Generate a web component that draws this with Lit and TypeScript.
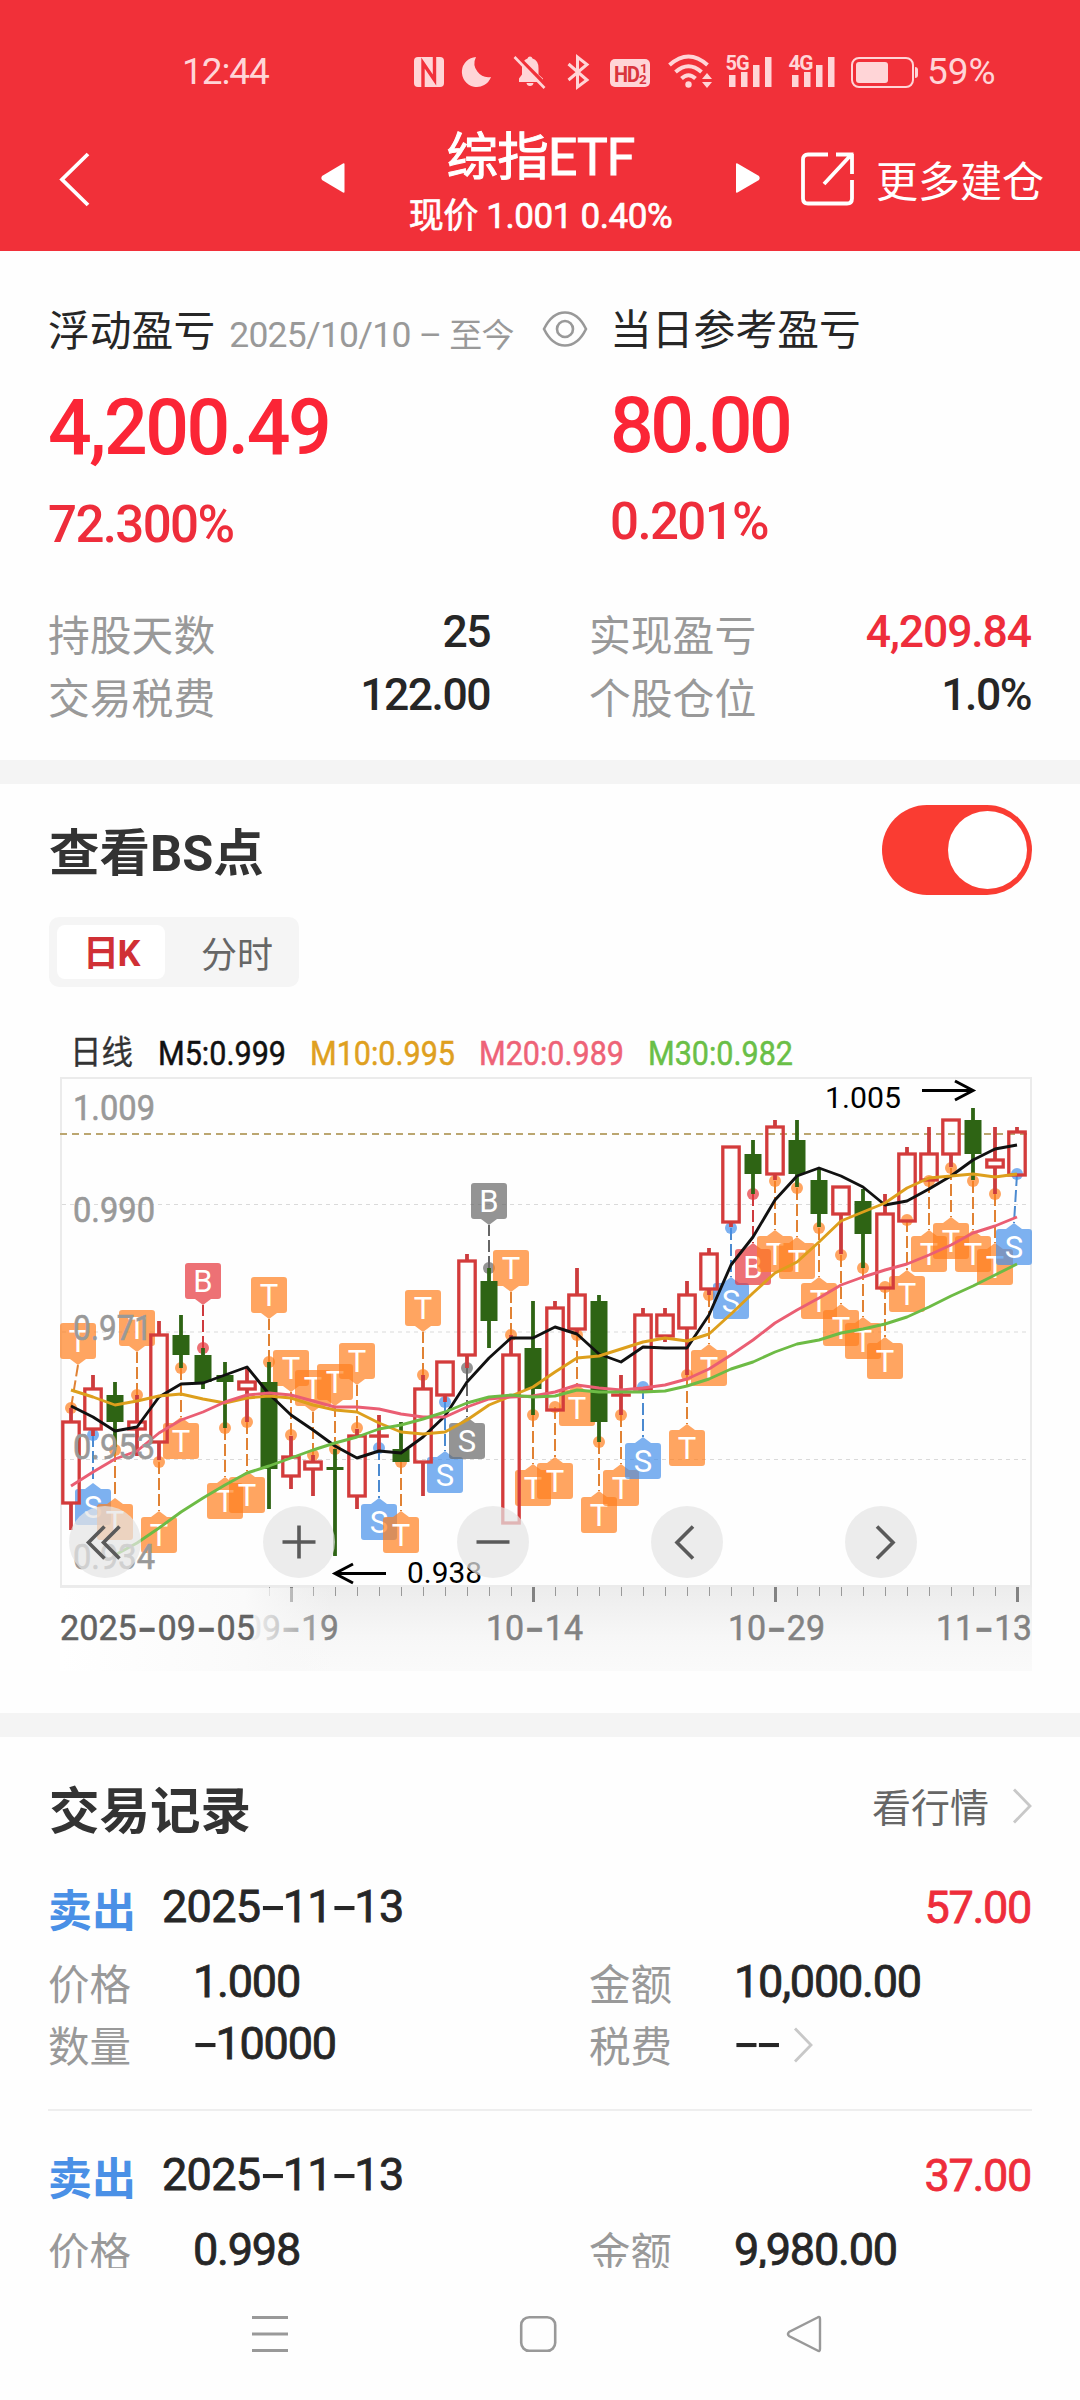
import { LitElement, html, svg, css } from "lit";
import { customElement, property } from "lit/decorators.js";

type Tone = "r" | "g";
type Candle = [Tone, number, number, number, number];
type Mark = [number, string, string, number, number];

/* tone, body top, body bottom, wick top, wick bottom */
const CANDLES: Candle[] = [
  ["r", 1422, 1503, 1408, 1530], ["r", 1389, 1429, 1375, 1436], ["g", 1395, 1422, 1382, 1447],
  ["r", 1422, 1429, 1395, 1456], ["r", 1335, 1442, 1321, 1460], ["g", 1335, 1355, 1315, 1368],
  ["g", 1355, 1382, 1348, 1389], ["g", 1375, 1382, 1362, 1428], ["r", 1382, 1389, 1368, 1422],
  ["g", 1382, 1469, 1362, 1509], ["r", 1457, 1476, 1436, 1489], ["r", 1462, 1469, 1455, 1496],
  ["g", 1467, 1470, 1449, 1556], ["r", 1436, 1496, 1429, 1509], ["r", 1436, 1436, 1415, 1452],
  ["g", 1449, 1462, 1422, 1462], ["r", 1389, 1462, 1375, 1496], ["r", 1362, 1395, 1362, 1402],
  ["r", 1261, 1355, 1254, 1368], ["g", 1281, 1321, 1268, 1348], ["r", 1355, 1523, 1335, 1523],
  ["g", 1348, 1389, 1301, 1415], ["r", 1308, 1410, 1301, 1410], ["r", 1295, 1329, 1268, 1333],
  ["g", 1301, 1422, 1295, 1442], ["r", 1395, 1395, 1375, 1415], ["r", 1315, 1389, 1308, 1389],
  ["r", 1315, 1336, 1308, 1342], ["r", 1295, 1328, 1281, 1375], ["r", 1254, 1289, 1248, 1295],
  ["r", 1147, 1222, 1147, 1227], ["g", 1154, 1174, 1140, 1194], ["r", 1127, 1174, 1120, 1180],
  ["g", 1140, 1174, 1120, 1187], ["g", 1180, 1214, 1169, 1227], ["r", 1187, 1214, 1187, 1254],
  ["g", 1201, 1234, 1189, 1268], ["r", 1214, 1288, 1194, 1288], ["r", 1154, 1221, 1147, 1221],
  ["r", 1154, 1180, 1127, 1180], ["r", 1120, 1154, 1120, 1167], ["g", 1120, 1154, 1108, 1180],
  ["r", 1160, 1167, 1127, 1194], ["r", 1132, 1175, 1127, 1175],
];

/* candle index, letter, colour, anchor y, box top */
const MARKS: Mark[] = [
  [0, "T", "o", 1408, 1323], [1, "S", "b", 1435, 1489], [2, "T", "o", 1450, 1504],
  [3, "T", "o", 1395, 1310], [4, "T", "o", 1462, 1517], [5, "T", "o", 1368, 1423],
  [6, "B", "r", 1348, 1263], [7, "T", "o", 1428, 1483], [8, "T", "o", 1422, 1477],
  [9, "T", "o", 1362, 1277], [10, "T", "o", 1435, 1350], [11, "T", "o", 1455, 1370],
  [12, "T", "o", 1449, 1364], [13, "T", "o", 1428, 1343], [14, "S", "b", 1448, 1504],
  [15, "T", "o", 1462, 1517], [16, "T", "o", 1375, 1290], [17, "S", "b", 1402, 1457],
  [18, "S", "k", 1368, 1423], [19, "B", "k", 1268, 1183], [20, "T", "o", 1335, 1250],
  [21, "T", "o", 1415, 1470], [22, "T", "o", 1407, 1463], [23, "T", "o", 1335, 1390],
  [24, "T", "o", 1442, 1497], [25, "T", "o", 1415, 1470], [26, "S", "b", 1387, 1443],
  [28, "T", "o", 1375, 1430], [29, "T", "o", 1295, 1350], [30, "S", "b", 1228, 1283],
  [31, "B", "r", 1194, 1249], [32, "T", "o", 1181, 1236], [33, "T", "o", 1188, 1243],
  [34, "T", "o", 1228, 1283], [35, "T", "o", 1255, 1310], [36, "T", "o", 1268, 1323],
  [37, "T", "o", 1287, 1343], [38, "T", "o", 1220, 1276], [39, "T", "o", 1181, 1236],
  [40, "T", "o", 1168, 1223], [41, "T", "o", 1181, 1236], [42, "T", "o", 1194, 1249],
  [43, "S", "b", 1174, 1229],
];

/* moving averages, right-aligned to the newest candle */
const AVERAGES: { tone: string; ys: number[] }[] = [
  { tone: "m5", ys: [1406, 1417, 1431, 1427, 1397, 1384, 1383, 1375, 1367, 1394, 1415, 1430, 1446, 1458, 1451, 1453, 1437, 1416, 1382, 1358, 1338, 1338, 1327, 1334, 1354, 1362, 1347, 1348, 1348, 1315, 1265, 1237, 1200, 1176, 1168, 1176, 1187, 1205, 1201, 1189, 1176, 1160, 1149, 1145] },
  { tone: "m10", ys: [1390, 1397, 1405, 1401, 1396, 1394, 1399, 1403, 1398, 1396, 1398, 1405, 1410, 1412, 1423, 1432, 1434, 1432, 1420, 1405, 1396, 1387, 1372, 1358, 1356, 1349, 1342, 1338, 1341, 1334, 1314, 1293, 1273, 1262, 1242, 1221, 1212, 1203, 1188, 1178, 1176, 1174, 1177, 1174] },
  { tone: "m20", ys: [1486, 1472, 1459, 1451, 1433, 1420, 1412, 1402, 1395, 1393, 1395, 1401, 1407, 1407, 1409, 1414, 1417, 1417, 1407, 1399, 1397, 1396, 1392, 1385, 1388, 1390, 1388, 1385, 1379, 1369, 1355, 1340, 1323, 1310, 1298, 1285, 1277, 1270, 1264, 1255, 1245, 1233, 1226, 1217] },
  { tone: "m30", ys: [1555, 1543, 1528, 1512, 1498, 1485, 1473, 1466, 1458, 1450, 1443, 1437, 1429, 1425, 1419, 1412, 1403, 1397, 1395, 1397, 1396, 1390, 1392, 1392, 1392, 1391, 1386, 1379, 1369, 1362, 1352, 1344, 1340, 1333, 1329, 1324, 1317, 1307, 1296, 1286, 1275, 1264] },
];

const cx = (i: number) => 71 + 22 * i;

@customElement("bs-chart")
export class BsChart extends LitElement {
  static styles = css`
    :host { display: block; }
    svg { display: block; }
    text { font-family: Roboto, "Noto Sans CJK SC", sans-serif; }
    .legend { font-size: 33px; font-weight: 400; stroke-width: 0.5; }
    .lg { fill: #333; stroke: #333; stroke-width: 0.3; }
    .l5 { fill: #111; stroke: #111; }
    .l10 { fill: #dfa020; stroke: #dfa020; }
    .l20 { fill: #ee6377; stroke: #ee6377; }
    .l30 { fill: #6abf47; stroke: #6abf47; }
    .axis { font-size: 35.5px; fill: #999; stroke: #999; stroke-width: 0.6; }
    .date { font-size: 35px; fill: #828282; stroke: #828282; stroke-width: 0.5; }
    .first { fill: #636363; stroke: #636363; }
    .dash { font-family: Inter, sans-serif; font-size: 46px; font-weight: 400; }
    .peak { font-size: 29px; fill: #000; }
    .arrow { fill: none; stroke: #000; stroke-width: 3; }
    .frame { fill: none; stroke: #ebebeb; stroke-width: 2; }
    .grid { stroke: #dadada; stroke-width: 1.2; stroke-dasharray: 4 4; }
    .price { stroke: #bba670; stroke-width: 1.8; stroke-dasharray: 7 5; }
    .mark text { fill: #fff; font-size: 31px; text-anchor: middle; }
    .stem { fill: none; stroke-width: 2; stroke-dasharray: 12 4; }
    .o .box { fill: #ff7f1e; fill-opacity: 0.7; }
    .b .box { fill: #4690e9; fill-opacity: 0.7; }
    .r .box { fill: #e6343a; fill-opacity: 0.7; }
    .k .box { fill: #666; fill-opacity: 0.7; }
    .o .stem { stroke: #e08234; }
    .b .stem { stroke: #4b8ad0; }
    .r .stem { stroke: #ce3a3e; }
    .k .stem { stroke: #666; }
    .hollow { fill: none; stroke: #d33b3b; stroke-width: 3.3; }
    .wr { stroke: #cc3b3d; stroke-width: 3.8; }
    .wg { stroke: #2e6414; stroke-width: 3.8; }
    .down { fill: #2e6414; }
    .ma { fill: none; stroke-width: 2.9; stroke-linejoin: round; }
    .m5 { stroke: #111; }
    .m10 { stroke: #dd9f1c; }
    .m20 { stroke: #ea5e73; }
    .m30 { stroke: #6dbb45; }
    .tick { stroke: #999; stroke-width: 1; }
    .major { stroke: #828282; stroke-width: 3; }
    .btn { fill: #e5e5e5; fill-opacity: 0.72; }
    .glyph { fill: none; stroke: #5a5a5a; stroke-width: 3.6; }
  `;

  private mark([i, letter, tone, dot, top]: Mark) {
    const x = cx(i);
    const bx = i === 0 ? 78 : i === 43 ? 1014 : x;
    const above = top < dot;
    const tip = above ? top + 42 : top - 6;
    const edge = above ? top + 36 : top;
    return svg`<g class="mark ${tone}">
      <path class="stem" d="M${x} ${dot}L${bx} ${tip}"/>
      <circle class="box" cx=${x} cy=${dot} r="6"/>
      <path class="box" d=${`M${bx - 18} ${top + 3}q0-3 3-3h30q3 0 3 3v30q0 3-3 3h-30q-3 0-3-3z M${bx - 8} ${edge}L${bx} ${tip}L${bx + 8} ${edge}z`}/>
      <text x=${bx} y=${top + 29}>${letter}</text>
    </g>`;
  }

  private candle([tone, t, b, wt, wb]: Candle, i: number) {
    const x = cx(i);
    if (tone === "g") {
      return svg`<line class="wg" x1=${x} x2=${x} y1=${wt} y2=${wb}/>
        <rect class="down" x=${x - 8.5} y=${t} width="17" height=${b - t}/>`;
    }
    return svg`<line class="wr" x1=${x} x2=${x} y1=${wt} y2=${t}/>
      <line class="wr" x1=${x} x2=${x} y1=${b} y2=${wb}/>
      <rect class="hollow" x=${x - 8.2} y=${t} width="16.4" height=${Math.max(b - t, 0.1)}/>`;
  }

  private day(text: string, x: number, w: number, extra = "") {
    const bits = text.split("-");
    return svg`<text class="date ${extra}" x=${x} y="1640" textLength=${w} lengthAdjust="spacingAndGlyphs">${bits.map(
      (b, n) => n === 0 ? svg`${b}` : svg`<tspan class="dash" dy="4">-</tspan><tspan dy="-4">${b}</tspan>`)}</text>`;
  }

  private label(cls: string, t: string, x: number, y: number, w: number) {
    return svg`<text class=${cls} x=${x} y=${y} textLength=${w} lengthAdjust="spacingAndGlyphs">${t}</text>`;
  }

  render() {
    return html`<svg width="1080" height="660" viewBox="0 1030 1080 660">
      <defs>
        <linearGradient id="strip" x1="0" y1="0" x2="0" y2="1">
          <stop offset="0" stop-color="#ececec"/><stop offset="0.6" stop-color="#f7f7f7"/><stop offset="1" stop-color="#fafafa"/>
        </linearGradient>
        <linearGradient id="fade" x1="0" y1="0" x2="1" y2="0">
          <stop offset="0" stop-color="#fff"/><stop offset="0.68" stop-color="#fafafa"/><stop offset="0.75" stop-color="#f9f9f9" stop-opacity="0.8"/><stop offset="1" stop-color="#f6f6f6" stop-opacity="0"/>
        </linearGradient>
      </defs>
      ${this.label("legend lg", "日线", 70, 1064, 63)}
      ${this.label("legend l5", "M5:0.999", 158, 1065, 128)}
      ${this.label("legend l10", "M10:0.995", 310, 1065, 145)}
      ${this.label("legend l20", "M20:0.989", 479, 1065, 145)}
      ${this.label("legend l30", "M30:0.982", 648, 1065, 145)}
      <rect x="60" y="1586" width="972" height="85" fill="url(#strip)"/>
      ${[1204.5, 1332, 1459.5].map((y) => svg`<line class="grid" x1="62" x2="1031" y1=${y} y2=${y}/>`)}
      <rect class="frame" x="61" y="1078" width="970" height="508"/>
      <line class="price" x1="60" x2="1031" y1="1134" y2="1134"/>
      ${MARKS.map((m) => this.mark(m))}
      ${CANDLES.map((c, i) => this.candle(c, i))}
      ${AVERAGES.map((a) => {
        const start = 44 - a.ys.length;
        return svg`<polyline class="ma ${a.tone}" points=${a.ys.map((y, n) => `${cx(start + n)},${y}`).join(" ")}/>`;
      })}
      ${this.label("axis", "1.009", 73, 1120, 82)}
      ${this.label("axis", "0.990", 73, 1222, 82)}
      ${this.label("axis", "0.971", 73, 1340, 79)}
      ${this.label("axis", "0.953", 73, 1459, 82)}
      ${this.label("axis", "0.934", 73, 1569, 82)}
      ${this.label("peak", "1.005", 825, 1108, 76)}
      <path class="arrow" d="M922 1090.5H973M955 1081l18 9.500-18 9.500"/>
      ${this.label("peak", "0.938", 407, 1583, 75)}
      <path class="arrow" d="M386 1573.500H336M353 1564l-18 9.500 18 9.500"/>
      ${Array.from({ length: 35 }, (_, n) => n + 9).map((i) =>
        (i - 10) % 11 === 0
          ? svg`<line class="major" x1=${cx(i) + 0.5} x2=${cx(i) + 0.5} y1="1587" y2="1602"/>`
          : svg`<line class="tick" x1=${cx(i) + 0.5} x2=${cx(i) + 0.5} y1="1587" y2="1596"/>`)}
      ${this.day("09-19", 243, 96)}
      <rect x="60" y="1588" width="272" height="83" fill="url(#fade)"/>
      ${this.day("2025-09-05", 60, 195, "first")}
      ${this.day("10-14", 486, 97)}
      ${this.day("10-29", 728, 97)}
      ${this.day("11-13", 936, 96)}
      ${[105, 299, 493, 687, 881].map((x) => svg`<circle class="btn" cx=${x} cy="1542" r="36"/>`)}
      <path class="glyph" d="M104.500 1526.500L88.500 1542.500l16 16M119.500 1526.500l-16 16 16 16M282.500 1542h33M299 1525.500v33M476.500 1542h33M693 1526.500l-16 16 16 16M877 1526.500l16 16-16 16"/>
    </svg>`;
  }
}

const chevron = (w = 20) => html`<svg class="chev" width=${w} height="36" viewBox="0 0 20 36">
  <path d="M2 1.500L18 18 2 34.500" fill="none" stroke="#c8c8c8" stroke-width="2.800"/></svg>`;

const dashed = (t: string) => t.split(/(-)/).map((p) => (p === "-" ? html`<span class="dash">-</span>` : p));

@customElement("trade-row")
export class TradeRow extends LitElement {
  @property() date = "";
  @property() gain = "";
  @property() price = "";
  @property() total = "";
  @property() count = "";
  @property() fee = "";

  static styles = css`
    :host { display: block; font-family: Roboto, "Noto Sans CJK SC", sans-serif; color: #262626; }
    .head { display: flex; align-items: center; height: 74px; font-size: 45px; letter-spacing: -0.9px; }
    .side { color: #4a90e6; font-weight: 700; font-size: 44px; letter-spacing: 0; width: 114px; padding-top: 1px; }
    .date, .v { line-height: 60px; padding-bottom: 1px; font-weight: 400; -webkit-text-stroke: 0.8px #262626; }
    .date { letter-spacing: -0.700px; }
    .gain { margin-left: auto; color: #ee2d3b; font-weight: 400; letter-spacing: -1.300px; -webkit-text-stroke: 0.8px #ee2d3b; }
    .grid { display: grid; grid-template-columns: 541px 1fr; grid-auto-rows: 62.500px; padding-top: 7px; }
    .cell { display: flex; align-items: center; }
    .k { width: 145px; font-size: 41.500px; color: #999; padding-bottom: 1px; font-weight: 400; }
    .v { font-size: 45px; letter-spacing: -1.200px; }
    .dash { font-family: Inter, sans-serif; font-size: 66px; line-height: 0; vertical-align: -7px; letter-spacing: -5px; margin-left: -2.500px; font-weight: 300; -webkit-text-stroke: 0; }
    .chev { margin-left: 14px; }
  `;

  render() {
    return html`
      <div class="head"><span class="side">卖出</span><span class="date">${dashed(this.date)}</span><span class="gain">${this.gain}</span></div>
      <div class="grid">
        <div class="cell"><span class="k">价格</span><span class="v">${this.price}</span></div>
        <div class="cell"><span class="k">金额</span><span class="v">${this.total}</span></div>
        ${this.count ? html`
        <div class="cell"><span class="k">数量</span><span class="v">${dashed(this.count)}</span></div>
        <div class="cell"><span class="k">税费</span><span class="v">${dashed(this.fee)}</span>${chevron()}</div>` : ""}
      </div>`;
  }
}

@customElement("app-root")
export class AppRoot extends LitElement {
  static styles = css`
    :host { display: block; width: 1080px; height: 2400px; overflow: hidden; background: #fefefe; color: #262626;
      font-family: Roboto, "Noto Sans CJK SC", sans-serif; }
    * { box-sizing: border-box; }
    svg { display: block; flex: none; }
    .header { height: 250.500px; background: #f13039; color: #fff; }
    .status { display: flex; align-items: center; height: 112px; padding: 30px 0 0 182px; color: #ffd5d7; font-size: 37px; letter-spacing: -1.100px; }
    .clock { width: 218px; }
    .batt { margin-left: 7px; letter-spacing: 0; }
    .bar { display: flex; align-items: center; height: 134px; padding-left: 58px; }
    .bar .title { width: 389px; display: flex; flex-direction: column; align-items: center; padding-top: 10px; }
    .name { font-size: 51.500px; font-weight: 400; line-height: 62px; letter-spacing: -0.800px; -webkit-text-stroke: 1px #fff; }
    .quote { font-size: 35px; font-weight: 400; line-height: 48px; letter-spacing: -0.400px; margin-top: 4px; -webkit-text-stroke: 0.7px #fff; }
    .left { margin-left: 230px; }
    .bar .left, .bar .right { margin-top: -2px; }
    .more { font-size: 42px; margin-left: 20px; line-height: 60px; padding-top: 8px; }
    .share { margin-left: 39px; }
    .summary { height: 509.500px; padding: 39.500px 49px 0 48px; }
    .cols { display: grid; grid-template-columns: 562px 1fr; }
    .col-b { margin-top: -1px; }
    .cap { display: flex; align-items: center; height: 80px; font-size: 41.800px; line-height: 80px; padding-top: 3px; }
    .since { font-size: 35.500px; color: #999; margin-left: 14px; padding-top: 8px; letter-spacing: -0.750px; white-space: nowrap; }
    .since .cjk { font-size: 33px; }
    .eye { margin-left: auto; margin-right: 22px; margin-top: -5px; }
    .big { font-size: 77px; font-weight: 500; height: 112px; line-height: 117px; letter-spacing: -2.500px; color: #fb2536; }
    .pct { font-size: 51px; font-weight: 500; height: 82px; line-height: 85px; letter-spacing: -1.600px; color: #ee2d3b; }
    .col-b .big { height: 108px; line-height: 114px; letter-spacing: -3.400px; }
    .col-b .pct { height: 86px; line-height: 90px; }
    .facts { display: grid; grid-template-columns: 442px 442px; column-gap: 99px; grid-auto-rows: 63px; margin-top: 38px; }
    .fact { display: flex; justify-content: space-between; align-items: center; }
    .fact .k { font-size: 41.800px; color: #999; padding-bottom: 2px; font-weight: 400; }
    .fact .v { font-size: 44.500px; font-weight: 500; letter-spacing: -1.500px; padding-bottom: 3px; }
    .fact .red { color: #ee2d3b; letter-spacing: -1.100px; }
    .gap { height: 24px; background: #f4f4f4; }
    .viewer { height: 929px; }
    .row { display: flex; align-items: center; justify-content: space-between; padding: 0 48px 0 49px; }
    .h { font-size: 50.500px; font-weight: 700; color: #333; }
    .viewer .row { height: 133px; }
    .viewer .h { padding-bottom: 4px; }
    .toggle { width: 150px; height: 90px; border-radius: 45px; background: #fa3c32; margin-top: -1px; padding: 6px 5px; display: flex; justify-content: flex-end; }
    .knob { width: 79px; height: 78px; border-radius: 50%; background: #fff; }
    .tabs { display: flex; align-items: center; width: 250px; height: 70px; margin-left: 49px; padding: 8px; border-radius: 10px; background: #f5f5f5; font-size: 36px; color: #666; }
    .on { width: 108px; height: 54px; line-height: 58px; border-radius: 8px; background: #fff; color: #d03035; font-weight: 700; text-align: center; letter-spacing: -1.500px; }
    .off { padding-left: 36px; font-weight: 400; }
    .chart { margin-top: 43px; height: 660px; }
    .trades { height: 531px; overflow: hidden; }
    .trades .row { height: 130px; padding-top: 10px; }
    .link { display: flex; align-items: center; gap: 23px; font-size: 39px; color: #666; font-weight: 400; margin-top: -4px; }
    .link .chev { margin-top: 2px; }
    .list { padding: 3px 49px 0 48px; }
    .sep { height: 2px; background: #eee; margin: 33px -1px 27px 0; }
    .nav { height: 132px; background: #fefefe; display: flex; align-items: center; padding-left: 250px; }
    .sq { margin-left: 228px; }
    .tri { margin-left: 227px; }
  `;

  private statusIcons() {
    return html`<svg width="520" height="60" viewBox="400 40 520 60" fill="#ffd5d7">
      <rect x="414" y="56" width="30" height="30" rx="4"/>
      <path d="M423 86V62L434.500 79V56" fill="none" stroke="#f13039" stroke-width="3.400"/>
      <path d="M429 78v8M429 56v8" stroke="#ffd5d7" stroke-width="2"/>
      <path d="M476 56A15 15 0 1 0 491 76A14 14 0 0 1 476 56z"/>
      <path d="M519 79v-1.500l3-4V67q0-8 5.500-9.500a2.600 2.600 0 0 1 5 0Q538.500 59.500 538.500 67v6.500l4.500 4V81h-24zM526.500 82h7q-.5 3-3.500 3t-3.500-3z"/>
      <path d="M516.500 55l31 31" stroke="#f13039" stroke-width="4"/>
      <path d="M514.500 56l30 31" stroke="#ffd5d7" stroke-width="2.600"/>
      <path d="M568.500 63L587 79l-9.500 7V56l9.500 7.500L568.500 79" fill="none" stroke="#ffd5d7" stroke-width="3"/>
      <rect x="610" y="58" width="40" height="28" rx="5"/>
      <text x="614" y="80.500" font-family="Roboto" font-weight="700" font-size="22" fill="#d9353d" textLength="25" lengthAdjust="spacingAndGlyphs">HD</text>
      <text x="640" y="71.500" font-family="Roboto" font-weight="700" font-size="13.500" fill="#d9353d">1</text>
      <text x="639" y="82.500" font-family="Roboto" font-weight="700" font-size="13.500" fill="#d9353d">2</text>
      <g fill="none" stroke="#ffd5d7" stroke-width="4">
        <path d="M669.500 64Q688.500 47 707.500 64M675.500 71Q688.500 59.500 701.500 71M681.500 77.500Q688.500 71 695.500 77.500"/>
      </g>
      <circle cx="688.500" cy="83.500" r="3.200"/>
      <path d="M702 78l5-6 5 6zM702 81h10l-5 6z"/>
      <text x="725.500" y="69" font-family="Roboto" font-weight="700" font-size="20.500" textLength="23" lengthAdjust="spacingAndGlyphs">5G</text>
      <text x="788.500" y="69" font-family="Roboto" font-weight="700" font-size="20.500" textLength="24" lengthAdjust="spacingAndGlyphs">4G</text>
      ${[729, 792].map((x) => svg`<path d=${`M${x} 74h6.500v12h-6.500zM${x + 12} 71h6.500v15h-6.500zM${x + 24} 64h6.500v22h-6.500zM${x + 36} 56h6.500v30h-6.500z`}/>`)}
      <rect x="852" y="57" width="61" height="29" rx="7" fill="none" stroke="#ffd5d7" stroke-width="2"/>
      <rect x="856" y="61" width="32" height="21" rx="3"/>
      <path d="M915 66q3 0 3 3v5q0 3-3 3z"/>
    </svg>`;
  }

  render() {
    return html`
      <div class="header">
        <div class="status"><span class="clock">12:44</span>${this.statusIcons()}<span class="batt">59%</span></div>
        <div class="bar">
          <svg width="32" height="56" viewBox="0 0 32 56"><path d="M30 3L4 28.500 30 54" fill="none" stroke="#fff" stroke-width="3.800"/></svg>
          <svg class="left" width="26" height="32" viewBox="0 0 26 32"><path d="M24.500 2v28q0 1-1.500 .5L2 18q-1.500-2 0-4L23 1.500q1.500-.5 1.500 .5z" fill="#fff"/></svg>
          <div class="title"><span class="name">综指ETF</span><span class="quote">现价 1.001 0.40%</span></div>
          <svg class="right" width="26" height="32" viewBox="0 0 26 32"><path d="M1 2v28q0 1 1.500 .5L24 18q1.500-2 0-4L2.500 1.500Q1 1 1 2z" fill="#fff"/></svg>
          <svg class="share" width="56" height="56" viewBox="0 0 56 56"><path d="M28 3.500H8Q3 3.500 3 8.500v39q0 5 5 5h39q5 0 5-5V29M24 33L50 5M36 3.500h17.500M52 3v20" fill="none" stroke="#fff" stroke-width="3.800"/></svg>
          <span class="more">更多建仓</span>
        </div>
      </div>
      <div class="summary">
        <div class="cols">
          <div>
            <div class="cap"><span>浮动盈亏</span><span class="since">2025/10/10 – <span class="cjk">至今</span></span>
              <svg class="eye" width="46" height="38" viewBox="0 0 46 38" fill="none" stroke="#999" stroke-width="2.600"><path d="M2 19Q10 2.500 23 2.500T44 19Q36 35.500 23 35.500T2 19z"/><circle cx="23" cy="19" r="8"/></svg></div>
            <div class="big">4,200.49</div>
            <div class="pct">72.300%</div>
          </div>
          <div class="col-b">
            <div class="cap">当日参考盈亏</div>
            <div class="big">80.00</div>
            <div class="pct">0.201%</div>
          </div>
        </div>
        <div class="facts">
          <div class="fact"><span class="k">持股天数</span><span class="v">25</span></div>
          <div class="fact"><span class="k">实现盈亏</span><span class="v red">4,209.84</span></div>
          <div class="fact"><span class="k">交易税费</span><span class="v">122.00</span></div>
          <div class="fact"><span class="k">个股仓位</span><span class="v">1.0%</span></div>
        </div>
      </div>
      <div class="gap"></div>
      <div class="viewer">
        <div class="row"><span class="h">查看BS点</span><div class="toggle"><div class="knob"></div></div></div>
        <div class="tabs"><span class="on">日K</span><span class="off">分时</span></div>
        <bs-chart class="chart"></bs-chart>
      </div>
      <div class="gap"></div>
      <div class="trades">
        <div class="row"><span class="h">交易记录</span><span class="link">看行情${chevron()}</span></div>
        <div class="list">
          <trade-row date="2025-11-13" gain="57.00" price="1.000" total="10,000.00" count="-10000" fee="--"></trade-row>
          <div class="sep"></div>
          <trade-row date="2025-11-13" gain="37.00" price="0.998" total="9,980.00"></trade-row>
        </div>
      </div>
      <div class="nav">
        <svg width="40" height="40" viewBox="0 0 40 40"><path d="M2 3.500h36M2 20h36M2 36.500h36" stroke="#999" stroke-width="3"/></svg>
        <svg class="sq" width="40" height="40" viewBox="0 0 40 40"><rect x="3.200" y="3.200" width="34" height="33.600" rx="8" fill="none" stroke="#999" stroke-width="2.600"/></svg>
        <svg class="tri" width="38" height="40" viewBox="0 0 38 40"><path d="M35 5v30q0 3-2.500 1.500L4 22q-2-2 0-4L32.500 3.500Q35 2 35 5z" fill="none" stroke="#999" stroke-width="2.400"/></svg>
      </div>`;
  }
}
